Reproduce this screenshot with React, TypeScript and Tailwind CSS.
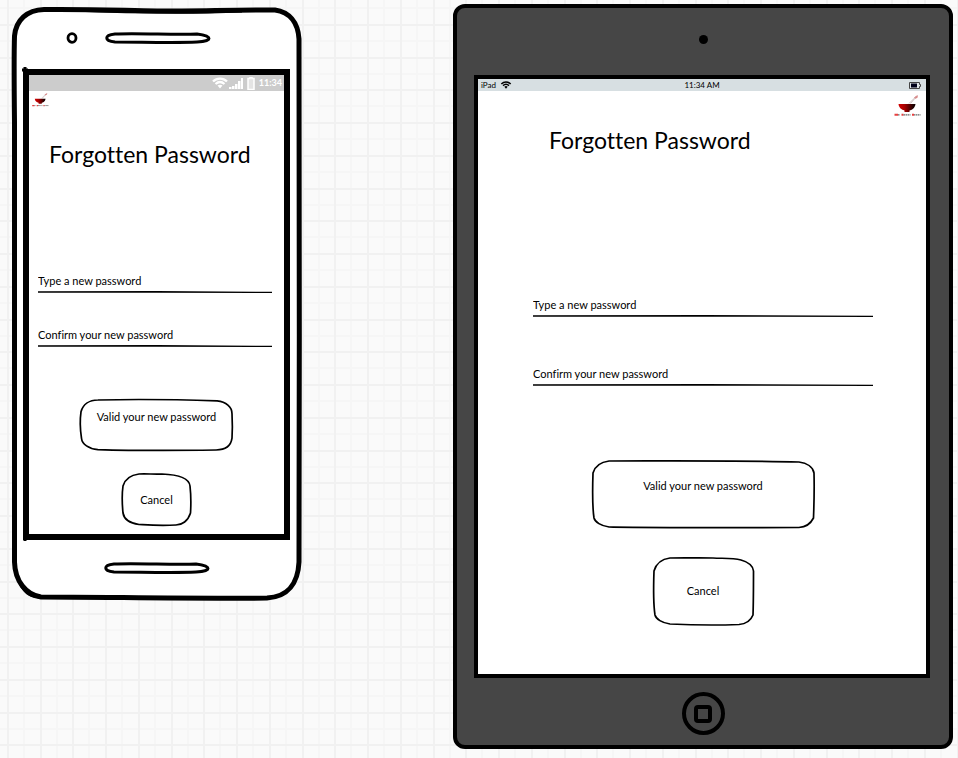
import React from "react";

function Backdrop() {
  return (
    <svg className="absolute inset-0 -z-10 h-full w-full" aria-hidden="true">
      <defs>
        <pattern id="grid" x="7" y="24" width="131" height="131" patternUnits="userSpaceOnUse">
          <rect width="131" height="131" fill="#fafafa" />
          <path d="M17 0V131M50 0V131M82 0V131M115 0V131M0 17H131M0 50H131M0 82H131M0 115H131" stroke="#f6f6f6" strokeWidth="2" />
          <path d="M1 0V131M34 0V131M66 0V131M99 0V131M0 1H131M0 34H131M0 66H131M0 99H131" stroke="#f1f1f1" strokeWidth="2" />
        </pattern>
      </defs>
      <rect width="100%" height="100%" fill="url(#grid)" />
    </svg>
  );
}

function BowlLogo({ className }: { className: string }) {
  return (
    <svg viewBox="0 0 54 44" className={className} role="img" aria-label="Logo">
      <defs>
        <linearGradient id="bowl" x1="0" x2="1">
          <stop offset="0" stopColor="#d40000" />
          <stop offset="0.35" stopColor="#a80000" />
          <stop offset="0.9" stopColor="#150000" />
        </linearGradient>
      </defs>
      <path d="M30 17L44 3M33 17L47 1" stroke="#b5a0a0" strokeWidth="1.2" />
      <path d="M41 6L46 1M43 7L48 3" stroke="#cf4a4a" strokeWidth="1.6" />
      <path d="M9 18H43C42 27 35 30 31 31V34H21V31C15 29 10 26 9 18Z" fill="url(#bowl)" />
      <path d="M1 39.500H8M15 39.500H19M36 39.500H40" stroke="#e84040" strokeWidth="4" />
      <path d="M8 39.500H12M19 39.500H33M40 39.500H53" stroke="#666" strokeWidth="2.500" strokeDasharray="3 1" />
    </svg>
  );
}

function Wifi({ className }: { className: string }) {
  return (
    <svg viewBox="0 0 16 12" className={className} fill="none" stroke="currentColor" aria-hidden="true">
      <path d="M1 4.500C5 .6 11 .6 15 4.500" strokeWidth="2.400" />
      <path d="M3.500 7C6.200 4.600 9.800 4.600 12.500 7" strokeWidth="2.200" />
      <path d="M5.500 8.500Q8 6.800 10.500 8.500L8 11.500Z" fill="currentColor" stroke="none" />
    </svg>
  );
}

const outlines = {
  phoneWide: {
    viewBox: "0 0 154 53",
    d: "M18 1C60 0 110 1 138 2C147 3 153 8 153 15C153.500 25 153.500 32 153 40C152 47 147 52 137 52C100 52.500 50 52.500 18 51.500C9 51 2 46 1.500 40C0 30 0 20 1 13C3 6 9 1 18 1Z",
  },
  phoneSmall: {
    viewBox: "0 0 69 53",
    d: "M17 1C25 .5 32 1.500 40 1C54 1.500 67 4 68 13C69 22 69 32 68.500 40C66 48 60 52 54 52C38 53 26 52 17 51.500C7 50 2 46 1 40C0 30 0 20 1 13C3 6 9 2 17 1Z",
  },
  tabletWide: {
    viewBox: "0 0 222 68",
    d: "M17 1C80 1 150 .5 206 2C214 3 220 7 221 13C221.500 30 221 45 220.500 58C218 63 213 67 206 67.500C140 68 80 67.500 17 67C9 66 3 62 2 58C0 45 .5 28 1 13C3 6 9 2 17 1Z",
  },
  tabletSmall: {
    viewBox: "0 0 101 68",
    d: "M17 1C32 .5 45 1 60 1C72 1.500 80 1 88 3C95 5 100 9 100.500 14C100.500 30 100.500 44 100 58C98 63 93 67 86 67.500C60 68.500 38 68 17 67C9 66 3 62 2 58C0 45 .5 28 1 14C3 7 9 2 17 1Z",
  },
};

function SketchButton({ shape, className, children }: { shape: keyof typeof outlines; className: string; children: React.ReactNode }) {
  return (
    <button type="button" className={`relative mx-auto flex justify-center text-[11px] leading-4 ${className}`}>
      <svg
        viewBox={outlines[shape].viewBox}
        preserveAspectRatio="none"
        className="absolute inset-0 h-full w-full overflow-visible"
        aria-hidden="true"
      >
        <path d={outlines[shape].d} fill="#fff" stroke="#000" strokeWidth="1.7" vectorEffect="non-scaling-stroke" />
      </svg>
      <span className="relative">{children}</span>
    </button>
  );
}

function PasswordField({ label, className }: { label: string; className: string }) {
  return (
    <div className={className}>
      <input
        type="password"
        aria-label={label}
        placeholder={label}
        className="block h-[17px] w-full bg-transparent p-0 text-[11px] leading-4 outline-none placeholder:text-black placeholder:opacity-100"
      />
      <svg viewBox="0 0 236 4" preserveAspectRatio="none" className="mt-px block h-1 w-full" aria-hidden="true">
        <path d="M0 1.200L120 1L236 1.800V3L120 2.800L0 2.800Z" fill="#000" />
      </svg>
    </div>
  );
}

function Slot() {
  return (
    <svg viewBox="0 0 106 12" className="h-3 w-[106px]" fill="#fff" stroke="#000" strokeWidth="3" aria-hidden="true">
      <path d="M10 2C35 1 70 3 92 2C108 4 108 9 92 10C70 11 35 10 10 10C-1 9 -1 3 10 2Z" />
    </svg>
  );
}

function Phone() {
  return (
    <section aria-label="Phone" className="relative mt-[7px] px-[11px] pb-[24px]">
      <svg viewBox="0 0 289 593" preserveAspectRatio="none" className="absolute inset-0 -z-10 h-full w-full overflow-visible" aria-hidden="true">
        <path
          d="M2.500 115C2 70 2 45 2.500 29C4 13 15 3 32 2.500C80 2 110 3.500 145 4C190 4 230 2.500 263 3C277 5 286 15 287 32C288 150 287 400 287 555C286 576 276 590 255 591C190 592 90 590 29 590C14 588 3 574 2.500 555C2 400 3 250 2.500 115Z"
          fill="#fff"
          stroke="#000"
          strokeWidth="5"
        />
        <path d="M60 3C110 5 180 6 230 4M8 576C14 588 20 590 30 590M13 60V66M10 63H16M13 529V534" fill="none" stroke="#000" strokeWidth="3" />
      </svg>
      <div className="flex h-[62px] items-center gap-[27px] pl-[43px]">
        <svg viewBox="0 0 12 12" className="h-3 w-3" aria-hidden="true">
          <ellipse cx="6" cy="6" rx="4" ry="4.300" fill="#fff" stroke="#000" strokeWidth="2.800" />
        </svg>
        <Slot />
      </div>
      <div className="border-6 border-black bg-white">
        <div className="flex h-4 items-center justify-end gap-1 bg-[#ccc] pr-0.5 text-white">
          <div className="flex items-end gap-px">
            <Wifi className="h-3 w-4" />
            <svg viewBox="0 0 14 12" className="h-3 w-[14px]" fill="currentColor" aria-hidden="true">
              <path d="M0 10H2.500V12H0ZM3 9H5.500V12H3ZM6 7H8.500V12H6ZM9 4H11.500V12H9ZM12 1H14V12H12Z" />
            </svg>
          </div>
          <svg viewBox="0 0 8 13" className="h-[13px] w-2" aria-hidden="true">
            <path d="M1 1.500H3V.5H5V1.500H7V12.500H1Z" fill="#e4e4e4" stroke="#fff" strokeWidth="1.500" />
          </svg>
          <span className="text-[9px] leading-4 font-bold">11:34</span>
        </div>
        <BowlLogo className="mt-0.5 ml-0.5 h-[14px] w-[19px]" />
        <h1 className="mt-[31px] pl-5 text-[23px] leading-8 whitespace-nowrap">Forgotten Password</h1>
        <form className="pr-3 pl-[9px]">
          <PasswordField label="Type a new password" className="mt-[102px]" />
          <PasswordField label="Confirm your new password" className="mt-8" />
        </form>
        <div className="pb-2">
          <SketchButton shape="phoneWide" className="mt-[51px] h-[52px] w-3/5 items-start pt-[10px]">
            Valid your new password
          </SketchButton>
          <SketchButton shape="phoneSmall" className="mt-[22px] h-[53px] w-[69px] items-center">
            Cancel
          </SketchButton>
        </div>
      </div>
      <div className="flex h-[36px] items-end justify-center pb-0.5">
        <Slot />
      </div>
    </section>
  );
}

function Tablet() {
  return (
    <section aria-label="Tablet" className="mt-1 rounded-xl border-4 border-black bg-[#464646]">
      <div className="flex h-[67px] items-center justify-center pb-1">
        <span className="size-[9px] rounded-full bg-black" />
      </div>
      <div className="mr-[19px] ml-[17px] border-4 border-black bg-white">
        <div className="grid h-3 grid-cols-3 items-center bg-[#d7dfe2] px-[3px] text-[8px] leading-3">
          <span className="flex items-center gap-1">
            iPad <Wifi className="h-2 w-3" />
          </span>
          <span className="text-center">11:34 AM</span>
          <svg viewBox="0 0 12 7" className="mr-0.5 h-[7px] w-3 justify-self-end" aria-hidden="true">
            <path d="M.5 .5H10.500V2.500H11.500V4.500H10.500V6.500H.5Z" fill="#dfe4e6" stroke="#444" />
            <path d="M2 1.500H8V5.500H2Z" fill="#000018" />
          </svg>
        </div>
        <div className="flex justify-end pt-1 pr-[5px]">
          <BowlLogo className="h-[22px] w-[27px]" />
        </div>
        <h1 className="mt-[7px] pl-[71px] text-[23px] leading-8 whitespace-nowrap">Forgotten Password</h1>
        <form className="pr-[53px] pl-[55px]">
          <PasswordField label="Type a new password" className="mt-[140px]" />
          <PasswordField label="Confirm your new password" className="mt-[47px]" />
        </form>
        <div className="pb-[49px] pl-0.5">
          <SketchButton shape="tabletWide" className="mt-[73px] h-[68px] w-1/2 items-start pt-[18px]">
            Valid your new password
          </SketchButton>
          <SketchButton shape="tabletSmall" className="mt-[29px] h-[68px] w-[101px] items-center">
            Cancel
          </SketchButton>
        </div>
      </div>
      <div className="flex h-[67px] items-center justify-center pt-1">
        <button type="button" aria-label="Home" className="flex size-[43px] items-center justify-center rounded-full border-4 border-black">
          <span className="size-[18px] rounded-[4px] border-4 border-black" />
        </button>
      </div>
    </section>
  );
}

export default function App() {
  return (
    <main className="relative isolate grid min-h-screen grid-cols-[289fr_500fr] items-start gap-[152px] overflow-hidden pr-[5px] pl-3 font-['Lato','Noto_Sans',sans-serif] text-black [font-variant-ligatures:none]">
      <Backdrop />
      <Phone />
      <Tablet />
    </main>
  );
}
